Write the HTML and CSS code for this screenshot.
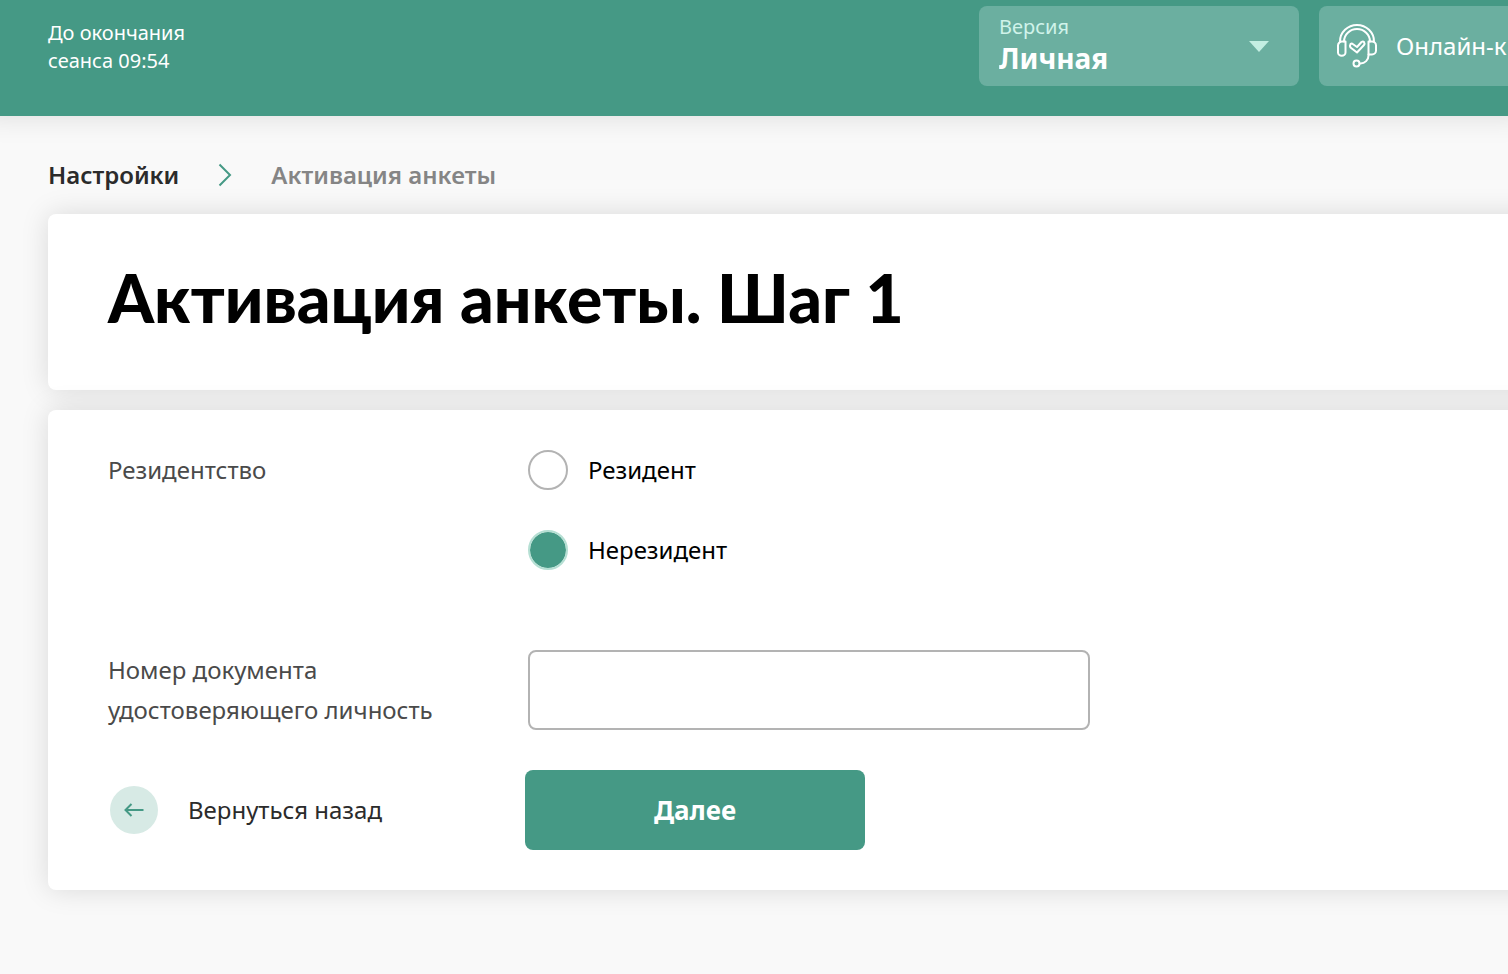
FILE: index.html
```html
<!DOCTYPE html>
<html lang="ru">
<head>
<meta charset="utf-8">
<meta name="viewport" content="width=device-width, initial-scale=1">
<title>Активация анкеты</title>
<link rel="stylesheet" href="styles.css">
</head>
<body>
<header class="header">
  <p class="session">До окончания<br>сеанса 09:54</p>
  <div class="version">
    <div class="version-body">
      <label class="version-label" for="version">Версия</label>
      <select class="version-select" id="version"><option>Личная</option></select>
    </div>
    <svg class="version-arrow" viewBox="0 0 20 11" aria-hidden="true"><path d="M0 0h20L10 11z" fill="currentColor"/></svg>
  </div>
  <button class="chat" type="button">
    <svg class="chat-icon" viewBox="0 0 42 46" fill="none" stroke="currentColor" stroke-width="2" stroke-linecap="round" stroke-linejoin="round" aria-hidden="true">
      <path d="M4 18.500a17 16.500 0 0 1 34 0M8 18.500a13 12.500 0 0 1 26 0"/>
      <path d="M9.500 18.500v11a3.500 3 0 0 1-7.500 0v-7a4 4 0 0 1 4-4zM32.500 18.500v13H36a4 4 0 0 0 4-4v-5a4 4 0 0 0-4-4z"/>
      <path d="M32.500 31.500v1a8 8 0 0 1-8 8H24"/>
      <circle cx="20.500" cy="40.500" r="3"/>
      <path d="M16 20.500l5 3.500 4.500-5q1.500-1 2.500 0 1 1.500 0 3L21 29.500l-6.500-5q-1-2 0-3.500z"/>
    </svg>
    <span>Онлайн-к</span>
  </button>
</header>
<main class="main">
  <nav class="crumbs" aria-label="Навигация">
    <a class="crumb-link" href="#">Настройки</a>
    <svg class="crumb-arrow" viewBox="0 0 14 24" fill="none" stroke="currentColor" stroke-width="2" aria-hidden="true"><path d="M1.500 1.500L12 12 1.500 22.500"/></svg>
    <span class="crumb-current">Активация анкеты</span>
  </nav>
  <section class="card title-card">
    <h1 class="title">Активация анкеты. Шаг 1</h1>
  </section>
  <form class="card form">
    <div class="row">
      <span class="caption" id="residence">Резидентство</span>
      <div class="options" role="radiogroup" aria-labelledby="residence">
        <label class="option"><input class="radio" type="radio" name="residence">Резидент</label>
        <label class="option"><input class="radio" type="radio" name="residence" checked>Нерезидент</label>
      </div>
    </div>
    <div class="row document">
      <label class="caption" for="document">Номер документа<br>удостоверяющего личность</label>
      <input class="field" id="document" type="text">
    </div>
    <div class="actions">
      <a class="back" href="#">
        <span class="back-circle"><svg class="back-icon" viewBox="0 0 20 14" fill="none" stroke="currentColor" stroke-width="2" aria-hidden="true"><path d="M19.500 7H1.500M7.500 1l-6 6 6 6"/></svg></span>
        Вернуться назад
      </a>
      <button class="next" type="submit">Далее</button>
    </div>
  </form>
</main>
</body>
</html>
```
FILE: styles.css
```css
* {
  box-sizing: border-box;
}

body {
  margin: 0;
  overflow-x: hidden;
  background: #f9f9f9;
  color: #000;
  font: 24px/38px "Noto Sans", "Open Sans", sans-serif;
}

.header {
  display: flex;
  align-items: flex-start;
  gap: 20px;
  padding: 6px 0 30px 48px;
  background: #459985;
  color: #fff;
  box-shadow: 0 -20px 28px 20px rgba(0, 0, 0, 0.12);
}

.session {
  margin: 13px auto 0 0;
  font-size: 20px;
  line-height: 28px;
}

.version {
  display: flex;
  align-items: center;
  width: 320px;
  height: 80px;
  padding: 0 30px 0 20px;
  border-radius: 8px;
  background: #6bafa0;
}

.version-body {
  display: flex;
  flex: 1;
  flex-direction: column;
  padding-bottom: 4px;
}

.version-label {
  color: #d0f3ea;
  font-size: 20px;
  line-height: 28px;
}

.version-select {
  appearance: none;
  width: 100%;
  padding: 0;
  border: 0;
  background: none;
  color: #fff;
  font: bold 28px/34px "Noto Sans", "Open Sans", sans-serif;
}

.version-arrow {
  width: 20px;
  height: 11px;
  color: #c3eee2;
}

.chat {
  display: flex;
  align-items: center;
  gap: 18px;
  width: 189px;
  height: 80px;
  padding: 0 0 0 17px;
  overflow: hidden;
  border: 0;
  border-radius: 8px 0 0 8px;
  background: #6bafa0;
  color: #fff;
  font: inherit;
  white-space: nowrap;
}

.chat-icon {
  flex: none;
  width: 42px;
  height: 46px;
}

.main {
  padding: 40px 0 84px 48px;
}

.crumbs {
  display: flex;
  align-items: center;
  gap: 39px;
  margin-bottom: 20px;
  font-weight: 600;
}

.crumb-link {
  color: #2b2b2b;
  text-decoration: none;
}

.crumb-arrow {
  width: 14px;
  height: 24px;
  color: #459985;
}

.crumb-current {
  color: #858585;
}

.card {
  margin-right: -48px;
  border-radius: 8px;
  background: #fff;
  box-shadow: 0 0 28px rgba(0, 0, 0, 0.13);
}

.title-card {
  margin-bottom: 20px;
  padding: 44px 60px 52px;
}

.title {
  margin: 0;
  font: 900 66px/80px Lato, "Noto Sans", sans-serif;
}

.form {
  padding: 40px 108px 40px 60px;
}

.row {
  display: grid;
  grid-template-columns: 420px 1fr;
}

.caption {
  color: #4a4a4a;
  line-height: 40px;
}

.options {
  display: grid;
  gap: 40px;
}

.option {
  display: flex;
  align-items: center;
  gap: 20px;
}

.radio {
  appearance: none;
  width: 40px;
  height: 40px;
  margin: 0;
  border: 2px solid #b3b3b3;
  border-radius: 50%;
  background: #fff;
}

.radio:checked {
  border-color: #b5dfd3;
  background: #459985;
  background-clip: padding-box;
}

.document {
  margin: 80px 0 40px;
}

.field {
  width: 562px;
  max-width: 100%;
  height: 80px;
  padding: 0 20px;
  border: 2px solid #b3b3b3;
  border-radius: 8px;
  background: #fff;
  font: inherit;
}

.actions {
  display: grid;
  grid-template-columns: 417px 1fr;
  align-items: center;
}

.back {
  display: flex;
  align-items: center;
  gap: 30px;
  padding-left: 2px;
  color: #2b2b2b;
  text-decoration: none;
}

.back-circle {
  display: grid;
  place-items: center;
  width: 48px;
  height: 48px;
  border-radius: 50%;
  background: #d7eae5;
}

.back-icon {
  width: 20px;
  height: 14px;
  color: #459985;
}

.next {
  width: 340px;
  height: 80px;
  border: 0;
  border-radius: 8px;
  background: #459985;
  color: #fff;
  font: bold 26px/36px "Noto Sans", "Open Sans", sans-serif;
}
```
